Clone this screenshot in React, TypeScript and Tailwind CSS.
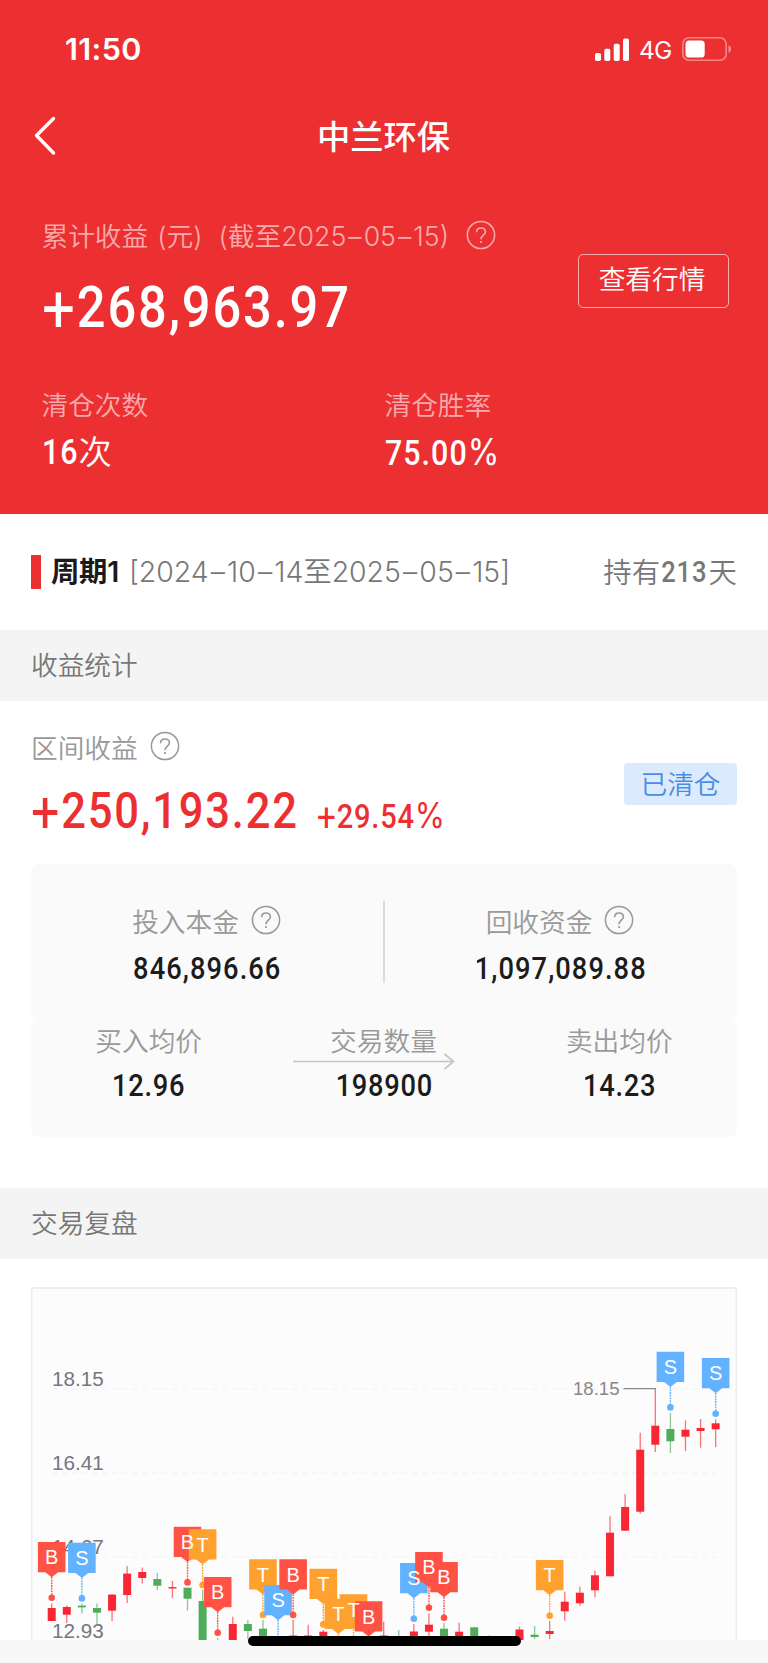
import { Fragment } from "react";
import clsx from "clsx";

type Candle = {
  i: number;
  up: boolean;
  high: number;
  low: number;
  top: number;
  bottom: number;
};

type Mark = { i: number; type: "B" | "S" | "T"; top: number };

const STEP = 15.09;
const START = 51.7;
const FLOOR = 1640;

const xOf = (i: number) => START + STEP * i;

const c = (i: number, up: boolean, high: number, low: number, top: number, bottom: number): Candle => ({
  i, up, high, low, top, bottom,
});

const candles: Candle[] = [
  c(0, true, 1603.5, 1621, 1608, 1621),
  c(1, true, 1605.5, 1623, 1607, 1614.7),
  c(2, false, 1603.5, 1613.5, 1605.6, 1607.4),
  c(3, false, 1603.5, 1624, 1608, 1612.7),
  c(4, true, 1594, 1621, 1594.6, 1610.7),
  c(5, true, 1566, 1603, 1573.6, 1595),
  c(6, true, 1567.5, 1583.5, 1572, 1578),
  c(7, false, 1573, 1590, 1579, 1585.7),
  c(8, true, 1581, 1598, 1587.1, 1588.5),
  c(9, false, 1587.7, 1610.5, 1587.7, 1598.7),
  c(10, false, 1590, FLOOR, 1601, FLOOR),
  c(11, false, 1638, FLOOR, FLOOR, FLOOR),
  c(12, true, 1616.7, FLOOR, 1624, FLOOR),
  c(13, false, 1620, 1639, 1624, 1631),
  c(14, false, 1620, FLOOR, 1628.7, FLOOR),
  c(16, true, 1620, FLOOR, 1635.5, FLOOR),
  c(17, true, 1624.7, FLOOR, 1635.5, FLOOR),
  c(18, true, 1630, FLOOR, 1631.7, FLOOR),
  c(22, true, 1621.7, FLOOR, 1635.5, FLOOR),
  c(23, false, 1630, FLOOR, FLOOR, FLOOR),
  c(24, true, 1624, FLOOR, 1631.5, FLOOR),
  c(25, true, 1613.5, 1636, 1624.7, 1631.7),
  c(26, false, 1623, FLOOR, 1628.7, FLOOR),
  c(27, true, 1622.7, FLOOR, 1631.7, FLOOR),
  c(28, false, 1627.3, FLOOR, 1627.3, FLOOR),
  c(29, true, 1635.5, FLOOR, FLOOR, FLOOR),
  c(31, true, 1626.7, FLOOR, 1629.5, FLOOR),
  c(32, false, 1626, 1639, 1634.7, 1637),
  c(33, true, 1621, 1639, 1631, 1634),
  c(34, true, 1591.7, 1620.7, 1601.7, 1611.3),
  c(35, true, 1586.7, 1605.7, 1592.7, 1603.3),
  c(36, true, 1570.7, 1597.3, 1575.3, 1590.3),
  c(37, true, 1516.3, 1576.3, 1532.7, 1576.3),
  c(38, true, 1494.3, 1530.7, 1507, 1530.7),
  c(39, true, 1432.7, 1513.7, 1449.7, 1511.7),
  c(40, true, 1388.7, 1452, 1425.7, 1444.7),
  c(41, false, 1413, 1453, 1429, 1441.3),
  c(42, true, 1420.3, 1451, 1429.7, 1436.7),
  c(43, true, 1419, 1447.7, 1428, 1431),
  c(44, true, 1419.3, 1447, 1423.3, 1429.3),
];

const marks: Mark[] = [
  { i: 0, type: "B", top: 1542 },
  { i: 2, type: "S", top: 1542.7 },
  { i: 9, type: "B", top: 1526.7 },
  { i: 10, type: "T", top: 1529.3 },
  { i: 11, type: "B", top: 1577 },
  { i: 14, type: "T", top: 1559.3 },
  { i: 15, type: "S", top: 1585 },
  { i: 16, type: "B", top: 1559.3 },
  { i: 18, type: "T", top: 1568.7 },
  { i: 19, type: "T", top: 1598.7 },
  { i: 20, type: "T", top: 1594.3 },
  { i: 21, type: "B", top: 1601.3 },
  { i: 24, type: "S", top: 1563 },
  { i: 25, type: "B", top: 1552 },
  { i: 26, type: "B", top: 1562 },
  { i: 33, type: "T", top: 1560 },
  { i: 41, type: "S", top: 1351.7 },
  { i: 44, type: "S", top: 1358 },
];

const markColor = { B: "#ff5144", S: "#62b2ff", T: "#ffa12f" };

const yAxis = [
  { label: "18.15", base: 1386, line: 1389 },
  { label: "16.41", base: 1470, line: 1473 },
  { label: "14.67", base: 1554, line: 1557 },
  { label: "12.93", base: 1638.3, line: 0 },
];

function Help({ className }: { className?: string }) {
  return (
    <svg viewBox="0 0 30 30" className={clsx("size-[30px] shrink-0", className)} fill="none" stroke="currentColor">
      <circle cx="15" cy="15" r="13.6" strokeWidth="1.5" />
      <path d="M10.6 12.3c0-2.7 1.9-4.3 4.4-4.3s4.4 1.6 4.4 4c0 3-4.4 3.5-4.4 7.2" strokeWidth="1.6" />
      <path d="M15 21v2" strokeWidth="1.7" />
    </svg>
  );
}

/* narrow numerals, squeezed from Roboto */
function Num({ children, className }: { children: React.ReactNode; className?: string }) {
  return (
    <span className={clsx("inline-block scale-x-[.88] whitespace-nowrap font-['Roboto',sans-serif] font-medium", className)}>
      {children}
    </span>
  );
}

function Plus() {
  return <span className="align-[-0.07em] text-[1.15em] leading-[0] font-normal">+</span>;
}

function Percent() {
  return <span className="font-['Inter',sans-serif] text-[1.06em] leading-[0] font-normal">%</span>;
}

/* dates with some air around the dashes */
function Day({ value }: { value: string }) {
  return value.split("–").map((part, i) => (
    <Fragment key={i}>
      {i > 0 && <span className="mx-[.075em]">–</span>}
      {part}
    </Fragment>
  ));
}

function StatusBar() {
  return (
    <div className="flex h-[98px] items-center justify-between pl-[65px] pr-[36px]">
      <span className="text-[30.5px] font-semibold tracking-[0.4px]">11:50</span>
      <div className="flex items-center">
        <svg viewBox="0 0 34 23" className="h-[23px] w-[34px]" fill="currentColor">
          <rect x="0" y="15" width="6" height="8" rx="1.8" />
          <rect x="9.3" y="10.8" width="6" height="12.2" rx="1.8" />
          <rect x="18.7" y="5.8" width="6" height="17.2" rx="1.8" />
          <rect x="28" y="0.5" width="6" height="22.5" rx="1.8" />
        </svg>
        <span className="ml-[10px] w-[33px] pt-[2px] text-[24.5px] leading-none tracking-[-0.8px]">4G</span>
        <svg viewBox="0 0 50 24" className="ml-[10px] h-[24px] w-[50px]" fill="none">
          <rect x="0.8" y="0.8" width="43.4" height="22.4" rx="6.2" stroke="#fff" strokeOpacity=".42" strokeWidth="1.6" />
          <rect x="3.5" y="3.5" width="19.2" height="17" rx="3.6" fill="#fff" />
          <path d="M46.5 8.2c1.7.7 2.6 2.1 2.6 3.8s-.9 3.1-2.6 3.8z" fill="#fff" fillOpacity=".45" />
        </svg>
      </div>
    </div>
  );
}

function Header() {
  return (
    <header className="h-[514px] bg-[#ec2f31] text-white">
      <StatusBar />

      <div className="grid h-[76px] grid-cols-[68px_1fr_68px] items-center">
        <svg viewBox="0 0 24 40" className="ml-[33px] h-[40px] w-[24px]" fill="none" stroke="currentColor" strokeWidth="3.4" strokeLinecap="round" strokeLinejoin="round">
          <path d="M20.5 2.5 3.5 19.5l17 17.5" />
        </svg>
        <h1 className="pt-[4px] pr-[1px] text-center text-[33.3px] font-medium">中兰环保</h1>
      </div>

      <div className="flex justify-between pl-[41.5px] pr-[39px] pt-[42.5px]">
        <div>
          <div className="flex h-[40px] items-center text-[26.7px] font-[350] text-white/60">
            <span>累计收益</span>
            <span className="ml-[9px]">(元)</span>
            <span className="ml-[16px]">(截至<Day value="2025–05–15" />)</span>
            <Help className="-mt-[4px] ml-[17px]" />
          </div>
          <Num className="mt-[21px] origin-left text-[57.5px] leading-[60px] tracking-[2.1px]"><Plus />268,963.97</Num>
        </div>
        <button className="mt-[37px] flex h-[54px] w-[151px] items-center justify-center rounded-[5px] border border-white/60 pr-[3px] pb-[2px] text-[26.7px] font-[350]">
          查看行情
        </button>
      </div>

      <div className="grid grid-cols-[343px_1fr] pl-[41.5px] pt-[47px]">
        <div>
          <div className="text-[26.7px] leading-[40px] font-[350] text-white/60">清仓次数</div>
          <div className="mt-[8.5px] flex h-[40px] items-center text-[33.3px] font-[350]">
            <Num className="w-[37px] origin-left text-[34.5px] tracking-[1px]">16</Num>
            <span>次</span>
          </div>
        </div>
        <div>
          <div className="text-[26.7px] leading-[40px] font-[350] text-white/60">清仓胜率</div>
          <Num className="mt-[8.5px] origin-left text-[34.5px] leading-[40px] tracking-[1.2px]">75.00<Percent /></Num>
        </div>
      </div>
    </header>
  );
}

function Band({ children }: { children: React.ReactNode }) {
  return (
    <div className="flex h-[71px] items-center bg-[#f4f4f4] pl-[31px] text-[26.7px] font-[350] text-[#777]">
      {children}
    </div>
  );
}

function Chart() {
  return (
    <svg viewBox="31 1287 706 353" className="block h-[353px] w-[706px]" fontFamily="'Liberation Sans', sans-serif">
      <rect x="31.5" y="1288" width="705" height="380" fill="#fcfcfc" stroke="#eeeeee" strokeWidth="2" />

      {yAxis.map((y) => (
        <g key={y.label}>
          {y.line > 0 && (
            <line x1="52" x2="716" y1={y.line} y2={y.line} stroke="#f3f3f3" strokeWidth="1.4" strokeDasharray="5.5 4.5" />
          )}
          <text x="52" y={y.base} fontSize="20.7" fill="#747680">{y.label}</text>
        </g>
      ))}

      {candles.map((k) => {
        const color = k.up ? "#f92634" : "#4fac5b";
        return (
          <g key={k.i}>
            <line x1={xOf(k.i)} x2={xOf(k.i)} y1={k.high} y2={k.low} stroke={color} strokeOpacity=".65" strokeWidth="1.3" />
            <rect x={xOf(k.i) - 4} y={k.top} width="8" height={k.bottom - k.top} fill={color} />
          </g>
        );
      })}

      {/* highest price pointer */}
      <text x="573" y="1395.4" fontSize="18.6" fill="#888">18.15</text>
      <line x1="623.5" x2="656" y1="1388.6" y2="1388.6" stroke="#888" strokeWidth="1.4" />

      {marks.map((m) => {
        const x = xOf(m.i);
        const fill = markColor[m.type];
        return (
          <g key={m.i}>
            <line x1={x} x2={x} y1={m.top + 35} y2={m.top + 53} stroke={fill} strokeWidth="1.4" strokeDasharray="1.8 0.9" />
            <circle cx={x} cy={m.top + 55.7} r="3.3" fill={fill} />
            <path
              d={`M${x - 13.8} ${m.top}h27.6v30.2h-7.4l-6.4 5.1-6.4-5.1h-7.4z`}
              fill={fill}
            />
          </g>
        );
      })}

      {/* letters go above every flag */}
      {marks.map((m) => (
        <text key={m.i} x={xOf(m.i)} y={m.top + 22.2} fontSize="20" fill="#fff" textAnchor="middle">
          {m.type}
        </text>
      ))}
    </svg>
  );
}

export default function App() {
  return (
    <div className="relative flex h-[1663px] w-[768px] flex-col overflow-hidden bg-white font-['Inter','Noto_Sans_CJK_SC',sans-serif]">
      <Header />

      <div className="flex h-[116px] items-center justify-between pl-[31px] pr-[31px] text-[28.4px] font-[350] text-[#777]">
        <div className="flex items-center">
          <span className="mr-[10px] h-[34px] w-[10px] bg-[#ec2f31]" />
          <span className="tracking-[-0.3px] font-semibold text-[#1a1a1a]">周期1</span>
          <span className="ml-[10px]">[<Day value="2024–10–14" />至<Day value="2025–05–15" />]</span>
        </div>
        <div className="flex items-center pt-[2px]">
          持有<Num className="-mx-[2px] text-[29px] tracking-[1px]">213</Num>天
        </div>
      </div>

      <Band>收益统计</Band>

      {/* profit */}
      <div className="flex h-[163px] justify-between pl-[31px] pr-[31px] pt-[27px]">
        <div>
          <div className="flex h-[40px] items-center text-[26.7px] font-[350] text-[#999]">
            区间收益
            <Help className="-mt-[4px] ml-[12px]" />
          </div>
          <div className="mt-[12.5px] flex items-baseline text-[#ec2f31]">
            <Num className="w-[286px] origin-left text-[49.5px] leading-[60px] tracking-[2px]"><Plus />250,193.22</Num>
            <Num className="origin-left text-[33px] tracking-[0.9px]"><Plus />29.54<Percent /></Num>
          </div>
        </div>
        <span className="mt-[35px] flex h-[42px] w-[113px] items-center justify-center rounded-[4px] bg-[#dceafd] text-[26.7px] font-[350] text-[#4a8de6]">
          已清仓
        </span>
      </div>

      <div className="mx-[31px] grid h-[157px] grid-cols-[1fr_2px_1fr] rounded-[8px] bg-[#fafafa] pt-[37px] text-[26.7px] font-[350] text-[#999]">
        <div className="text-center">
          <div className="flex h-[42px] items-center justify-center pr-[1px]">
            投入本金
            <Help className="-mt-[4px] ml-[12px]" />
          </div>
          <Num className="mt-[6px] text-[31px] leading-[40px] tracking-[1.2px] text-[#1c1c1c]">846,896.66</Num>
        </div>
        <div className="h-[82px] bg-[#dcdcdc]" />
        <div className="text-center">
          <div className="flex h-[42px] items-center justify-center pr-[2px]">
            回收资金
            <Help className="-mt-[4px] ml-[12px]" />
          </div>
          <Num className="mt-[6px] text-[31px] leading-[40px] tracking-[1.2px] text-[#1c1c1c]">1,097,089.88</Num>
        </div>
      </div>

      <div className="mx-[31px] grid h-[116px] grid-cols-3 rounded-[8px] bg-[#fafafa] text-center text-[26.7px] font-[350] text-[#999]">
        <div>
          <div className="leading-[40px]">买入均价</div>
          <Num className="mt-[5px] text-[31px] leading-[40px] tracking-[0.8px] text-[#1c1c1c]">12.96</Num>
        </div>
        <div>
          <div className="leading-[40px] pr-[1px]">交易数量</div>
          <svg viewBox="0 0 164 18" className="-mt-[9px] -mb-[9px] ml-[26px] h-[18px] w-[164px]" fill="none" stroke="#c4c4c4" strokeWidth="1.7">
            <path d="M1 9.5h160M152.5 2l9 7.5-9 7.5" />
          </svg>
          <Num className="mt-[5px] text-[31px] leading-[40px] tracking-[0.8px] text-[#1c1c1c]">198900</Num>
        </div>
        <div>
          <div className="leading-[40px]">卖出均价</div>
          <Num className="mt-[5px] text-[31px] leading-[40px] tracking-[0.8px] text-[#1c1c1c]">14.23</Num>
        </div>
      </div>

      <div className="h-[51px] shrink-0" />
      <Band>交易复盘</Band>

      <div className="mx-[31px] mt-[28px]">
        <Chart />
      </div>
      <div className="h-[23px] bg-[#f7f7f7]" />

      {/* home indicator */}
      <div className="absolute left-[247.5px] top-[1636px] h-[10px] w-[273.5px] rounded-full bg-black" />
    </div>
  );
}
